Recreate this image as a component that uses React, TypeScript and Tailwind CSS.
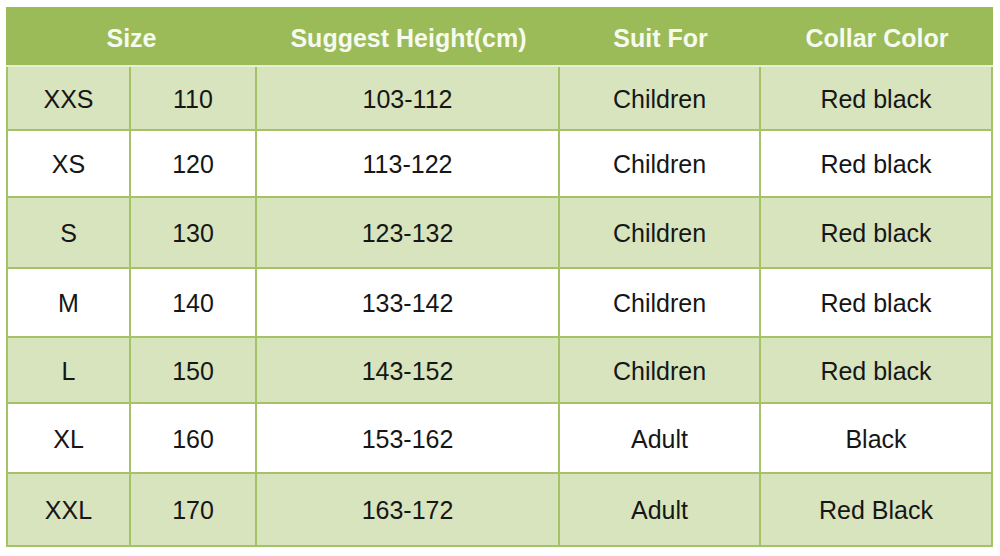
import React from "react";

const rows = [
  { size: "XXS", num: "110", height: "103-112", suit: "Children", collar: "Red black", h: "h-[64px]" },
  { size: "XS", num: "120", height: "113-122", suit: "Children", collar: "Red black", h: "h-[67px]" },
  { size: "S", num: "130", height: "123-132", suit: "Children", collar: "Red black", h: "h-[71px]" },
  { size: "M", num: "140", height: "133-142", suit: "Children", collar: "Red black", h: "h-[69px]" },
  { size: "L", num: "150", height: "143-152", suit: "Children", collar: "Red black", h: "h-[66px]" },
  { size: "XL", num: "160", height: "153-162", suit: "Adult", collar: "Black", h: "h-[70px]" },
  { size: "XXL", num: "170", height: "163-172", suit: "Adult", collar: "Red Black", h: "h-[73px]" },
];

const cell = "border-r-2 border-b-2 border-[#a6c266] text-center align-middle px-0 pb-0 pt-[3px]";

export default function App() {
  return (
    <div className="w-[1000px] h-[556px] bg-white pl-[6px] pt-[7px] font-['Liberation_Sans',Arial,sans-serif] text-[25px] text-[#161616]">
      <table className="w-[987px] table-fixed border-separate border-spacing-0">
        <colgroup>
          <col className="w-[125px]" />
          <col className="w-[126px]" />
          <col className="w-[303px]" />
          <col className="w-[201px]" />
          <col className="w-[232px]" />
        </colgroup>
        <thead>
          <tr className="h-[60px]">
            {[
              { t: "Size", span: 2 },
              { t: "Suggest Height(cm)", span: 1 },
              { t: "Suit For", span: 1 },
              { t: "Collar Color", span: 1 },
            ].map((c) => (
              <th
                key={c.t}
                colSpan={c.span}
                className="bg-[#9bbb59] px-0 pb-0 pt-[5px] text-center align-middle font-bold text-[#f7faef] border-b-2 border-[#e6eed4]"
              >
                {c.t}
              </th>
            ))}
          </tr>
        </thead>
        <tbody>
          {rows.map((r, i) => (
            <tr key={r.size} className={`${r.h} ${i % 2 === 0 ? "bg-[#d7e4bd]" : "bg-white"}`}>
              <td className={`${cell} border-l-2`}>{r.size}</td>
              <td className={cell}>{r.num}</td>
              <td className={cell}>{r.height}</td>
              <td className={cell}>{r.suit}</td>
              <td className={cell}>{r.collar}</td>
            </tr>
          ))}
        </tbody>
      </table>
    </div>
  );
}
